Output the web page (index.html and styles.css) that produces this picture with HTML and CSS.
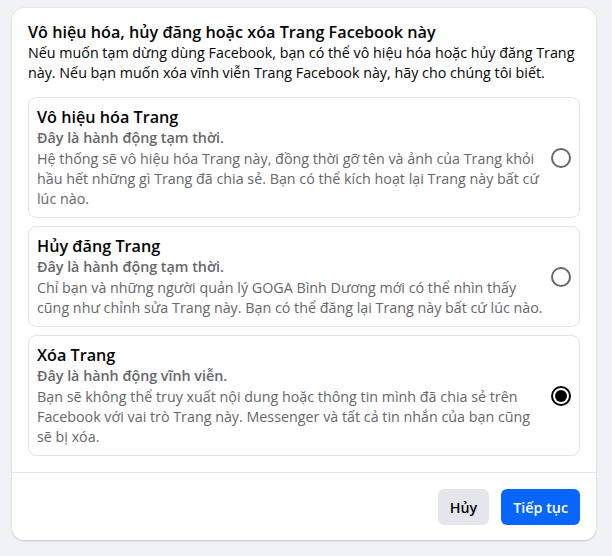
FILE: index.html
```html
<!DOCTYPE html>
<html lang="vi">
<head>
<meta charset="utf-8">
<title>Vô hiệu hóa, hủy đăng hoặc xóa Trang</title>
<link rel="stylesheet" href="styles.css">
</head>
<body>
<div class="card">
  <div class="body">
    <h1 class="title">Vô hiệu hóa, hủy đăng hoặc xóa Trang Facebook này</h1>
    <p class="intro">Nếu muốn tạm dừng dùng Facebook, bạn có thể vô hiệu hóa hoặc hủy đăng Trang này. Nếu bạn muốn xóa vĩnh viễn Trang Facebook này, hãy cho chúng tôi biết.</p>
    <div class="options">
      <label class="option">
        <div class="text">
          <div class="opt-title">Vô hiệu hóa Trang</div>
          <div class="opt-sub">Đây là hành động tạm thời.</div>
          <div class="opt-desc">Hệ thống sẽ vô hiệu hóa Trang này, đồng thời gỡ tên và ảnh của Trang khỏi hầu hết những gì Trang đã chia sẻ. Bạn có thể kích hoạt lại Trang này bất cứ lúc nào.</div>
        </div>
        <span class="radio"></span>
      </label>
      <label class="option">
        <div class="text">
          <div class="opt-title">Hủy đăng Trang</div>
          <div class="opt-sub">Đây là hành động tạm thời.</div>
          <div class="opt-desc">Chỉ bạn và những người quản lý GOGA Bình Dương mới có thể nhìn thấy cũng như chỉnh sửa Trang này. Bạn có thể đăng lại Trang này bất cứ lúc nào.</div>
        </div>
        <span class="radio"></span>
      </label>
      <label class="option">
        <div class="text">
          <div class="opt-title">Xóa Trang</div>
          <div class="opt-sub">Đây là hành động vĩnh viễn.</div>
          <div class="opt-desc">Bạn sẽ không thể truy xuất nội dung hoặc thông tin mình đã chia sẻ trên Facebook với vai trò Trang này. Messenger và tất cả tin nhắn của bạn cũng sẽ bị xóa.</div>
        </div>
        <span class="radio checked"></span>
      </label>
    </div>
  </div>
  <div class="footer">
    <button class="btn btn-gray">Hủy</button>
    <button class="btn btn-blue">Tiếp tục</button>
  </div>
</div>
</body>
</html>
```

FILE: styles.css
```css
* { box-sizing: border-box; }
html, body { margin: 0; padding: 0; }
body {
  background: #f0f2f5;
  font-family: "Open Sans", "Noto Sans", sans-serif;
  color: #050505;
  padding: 8px 16px 17px 12px;
}
.card {
  background: #fff;
  border-radius: 12px;
  box-shadow: 0 1px 2px rgba(0,0,0,0.15), 0 0 0 1px rgba(0,0,0,0.03);
}
.body {
  padding: 13px 16px 16px 16px;
}
.title {
  margin: 0;
  font-size: 16.2px;
  line-height: 22px;
  font-weight: 600;
}
.intro {
  margin: 0;
  font-size: 14.3px;
  line-height: 20px;
}
.options {
  margin-top: 14px;
  display: flex;
  flex-direction: column;
  gap: 8px;
}
.option {
  display: flex;
  align-items: center;
  gap: 5px;
  border: 1px solid #e1e3e7;
  border-radius: 8px;
  padding: 8px 8px 8px 8px;
}
.text { flex: 1; min-width: 0; }
.opt-title {
  font-size: 16.2px;
  line-height: 22px;
  font-weight: 600;
  color: #050505;
}
.opt-sub {
  font-size: 14.3px;
  line-height: 20px;
  font-weight: 600;
  color: #65676b;
}
.opt-desc {
  margin-top: 1px;
  font-size: 14.3px;
  line-height: 20px;
  color: #65676b;
}
.radio {
  flex: none;
  width: 20px;
  height: 20px;
  border-radius: 50%;
  border: 2px solid #65676b;
  position: relative;
}
.radio.checked {
  border-color: #050505;
}
.radio.checked::after {
  content: "";
  position: absolute;
  left: 2px;
  top: 2px;
  width: 12px;
  height: 12px;
  border-radius: 50%;
  background: #050505;
}
.footer {
  border-top: 1px solid #e4e6eb;
  padding: 16px 16px 15px;
  display: flex;
  justify-content: flex-end;
  gap: 12px;
}
.btn {
  height: 36px;
  border: none;
  border-radius: 6px;
  padding: 0 12px;
  font-family: inherit;
  font-size: 14.3px;
  font-weight: 600;
  cursor: pointer;
}
.btn-gray { background: #e4e6eb; color: #050505; }
.btn-blue { background: #0866ff; color: #fff; }
```
